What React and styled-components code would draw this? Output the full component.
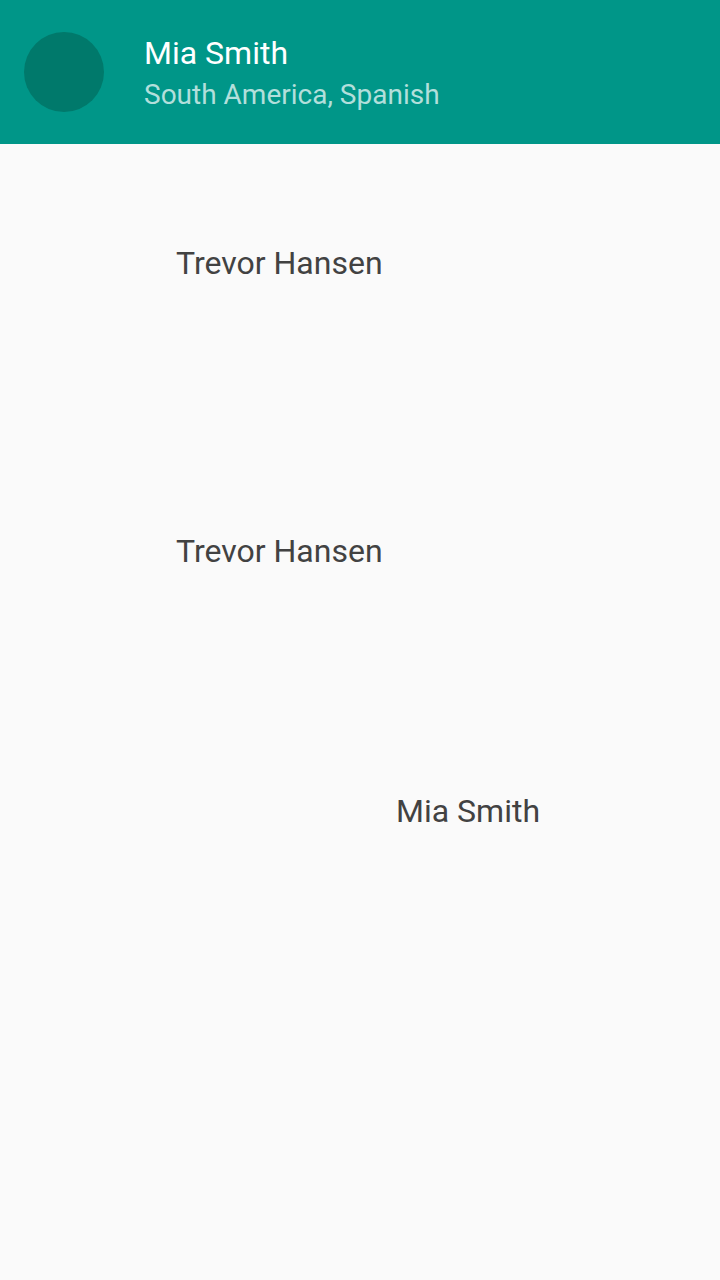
import React from "react";
import styled, { createGlobalStyle } from "styled-components";

const Global = createGlobalStyle`
  html, body { margin: 0; padding: 0; background: #fafafa; }
  body { font-family: Roboto, "Noto Sans", sans-serif; -webkit-font-smoothing: antialiased; }
  #root { min-height: 100vh; }
`;

const Screen = styled.div`
  display: flex;
  flex-direction: column;
  min-height: 100vh;
  background: #fafafa;
`;

const Header = styled.header`
  display: flex;
  align-items: center;
  gap: 40px;
  height: 144px;
  padding: 0 24px;
  box-sizing: border-box;
  background: #009688;
`;

const Avatar = styled.div`
  width: 80px;
  height: 80px;
  border-radius: 50%;
  background: #00796b;
  flex: none;
`;

const HeaderText = styled.div`
  display: flex;
  flex-direction: column;
  gap: 6px;
  margin-top: 1px;
`;

const Title = styled.div`
  font-size: 32px;
  line-height: 38px;
  color: #ffffff;
`;

const Subtitle = styled.div`
  font-size: 28px;
  line-height: 33px;
  color: #b2dfdb;
`;

const Messages = styled.main`
  display: flex;
  flex-direction: column;
  flex: 1;
  padding-top: 100px;
`;

const Row = styled.div`
  display: flex;
  margin-top: ${(p) => p.$top || 0}px;
  padding-left: ${(p) => p.$indent}px;
`;

const Name = styled.div`
  font-size: 32px;
  line-height: 38px;
  color: #424242;
`;

const messages = [
  { name: "Trevor Hansen", indent: 176, top: 0 },
  { name: "Trevor Hansen", indent: 176, top: 250 },
  { name: "Mia Smith", indent: 396, top: 222 },
];

export default function App() {
  return (
    <>
      <Global />
      <Screen>
        <Header>
          <Avatar />
          <HeaderText>
            <Title>Mia Smith</Title>
            <Subtitle>South America, Spanish</Subtitle>
          </HeaderText>
        </Header>
        <Messages>
          {messages.map((m, i) => (
            <Row key={i} $indent={m.indent} $top={m.top}>
              <Name>{m.name}</Name>
            </Row>
          ))}
        </Messages>
      </Screen>
    </>
  );
}
